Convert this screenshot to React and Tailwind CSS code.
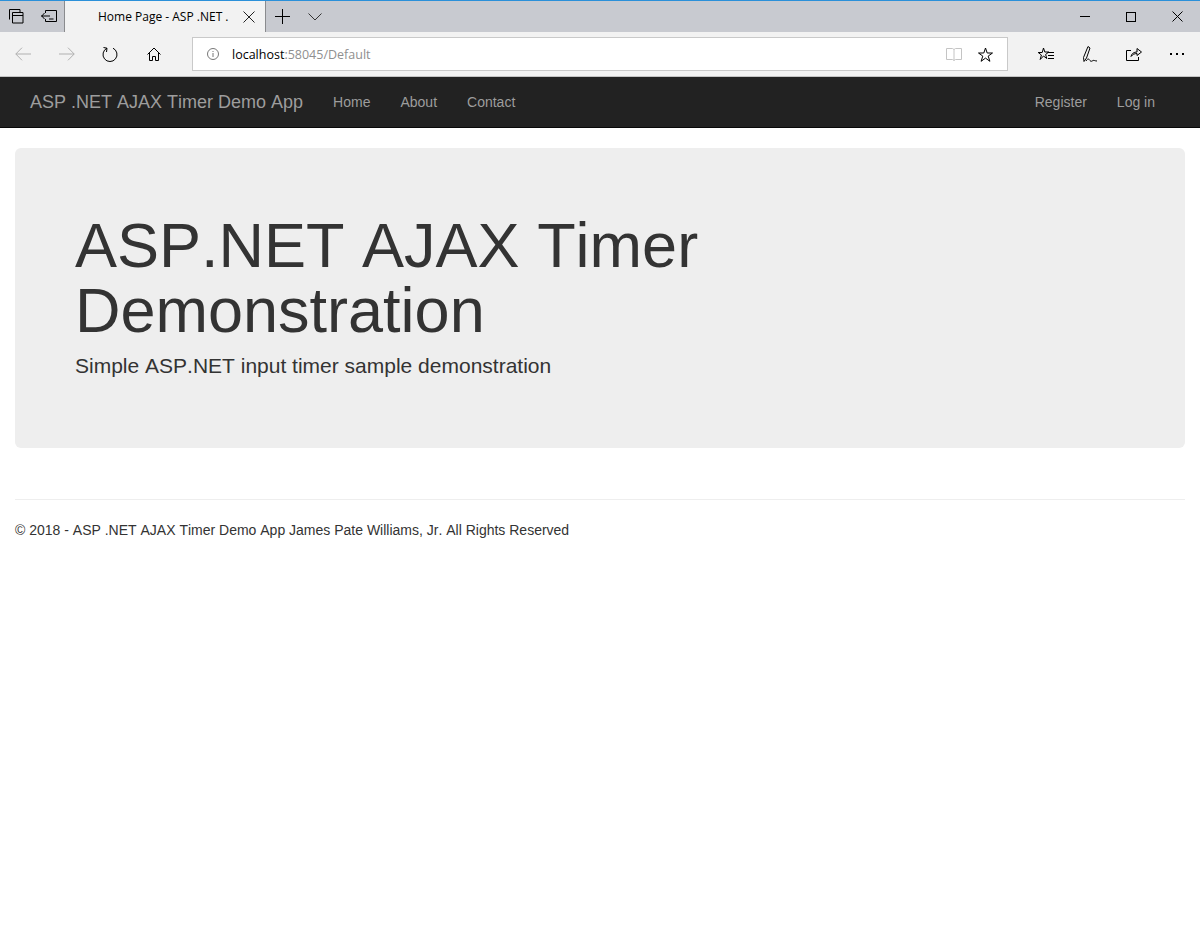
function Icon({ w, h, className = "", children, stroke = "black" }) {
  return (
    <svg className={`shrink-0 ${className}`} width={w} height={h} viewBox={`0 0 ${w} ${h}`} fill="none" stroke={stroke}>
      {children}
    </svg>
  );
}

function BrowserChrome() {
  return (
    <div className="font-['Open_Sans',sans-serif]">
      {/* Title bar with tab */}
      <div className="h-[32px] flex items-stretch bg-[#c8cad0] border-t-[1px] border-[#2b90d9]">
        <div className="w-[64px] flex items-center">
          <Icon w={15} h={15} className="ml-[9px]">
            <path d="M.5 10.500V.5h10.500V3M3.500 3.500h10.500v10.500H3.500zM3.500 6.500h10.500" />
          </Icon>
          <Icon w={16} h={13} className="ml-[17px]">
            <path d="M4.500 3V.5h11v11h-11V9M0 6h9M3.500 3L.8 6l2.700 3M8 9h4.500" />
          </Icon>
        </div>
        <div className="w-[202px] bg-[#f2f2f2] border-x border-[#8a8b8e] flex items-center">
          <span className="ml-[33px] w-[135px] overflow-hidden whitespace-nowrap text-[12px] text-black">Home Page - ASP .NET .</span>
          <Icon w={12} h={12} className="ml-[10px]" stroke="#222">
            <path d="M.5.5l11 11M11.500.5l-11 11" />
          </Icon>
        </div>
        <Icon w={15} h={15} className="ml-[9px] self-center">
          <path d="M7.500 0v15M0 7.500h15" />
        </Icon>
        <Icon w={14} h={8} className="ml-[18px] self-center" stroke="#333">
          <path d="M.5.5L7 7l6.500-6.500" />
        </Icon>
        <div className="ml-auto flex items-center">
          <Icon w={10} h={1} className="mr-[36px]">
            <path d="M0 .5h10" />
          </Icon>
          <Icon w={10} h={10} className="mr-[36px]">
            <rect x=".5" y=".5" width="9" height="9" />
          </Icon>
          <Icon w={11} h={11} className="mr-[17px]">
            <path d="M.5.5l10 10M10.500.5l-10 10" />
          </Icon>
        </div>
      </div>
      {/* Address toolbar */}
      <div className="h-[45px] bg-[#f2f2f2] border-b border-[#c4c4c4] flex items-center">
        <Icon w={16} h={14} className="ml-[15px]" stroke="#b0b0b0">
          <path d="M.8 7H16M7 .7L.8 7 7 13.300" />
        </Icon>
        <Icon w={16} h={14} className="ml-[28px]" stroke="#b0b0b0">
          <path d="M0 7h15.200M9 .7L15.200 7 9 13.300" />
        </Icon>
        <Icon w={16} h={16} className="ml-[27px]">
          <path d="M5 2.200A7 7 0 1 0 11 2.200M1.500 1.500L5 2.200 4.500 6" />
        </Icon>
        <Icon w={14} h={14} className="ml-[29px]">
          <path d="M.5 7.500L7 1l6.500 6.500M2.500 5.500v8h3v-4h3v4h3v-8" />
        </Icon>
        <div className="ml-[31px] w-[816px] h-[34px] bg-white border border-[#c9c9c9] flex items-center">
          <Icon w={12} h={12} className="ml-[14px]" stroke="#777">
            <circle cx="6" cy="6" r="5.500" />
            <path d="M6 5v4M6 3v1" />
          </Icon>
          <span className="ml-[13px] pt-[2px] text-[12.5px] text-black">
            localhost<span className="text-[#8f8f8f]">:58045/Default</span>
          </span>
          <Icon w={16} h={14} className="ml-auto" stroke="#c4c4c4">
            <path d="M.5 1.500h6L8 2.500l1.500-1h6v11h-6L8 13.500l-1.500-1h-6zM8 2.500v11" />
          </Icon>
          <Icon w={15} h={15} className="ml-[16px] mr-[14px]">
            <path d="M7.500 1l1.700 5h5.300l-4.300 3.100 1.700 5.200-4.400-3.200-4.400 3.200 1.700-5.200L.5 6h5.300z" />
          </Icon>
        </div>
        <Icon w={16} h={15} className="ml-[30px]">
          <path d="M5.500 1l1.300 4h4l-3.200 2.500 1.200 4-3.300-2.500L2.200 12.500l1.200-4.500L.2 5.500h4zM9.500 5.500H16M10 8.500h6M10 11.500h6" />
        </Icon>
        <Icon w={15} h={17} className="ml-[29px]">
          <path d="M5 .5l2 1.500L3.500 12 1 15.500l-.5-4zM3 15c2-3 3-2 4-.5s2 .5 3 0 2 .5 4 .5" />
        </Icon>
        <Icon w={16} h={14} className="ml-[28px]">
          <path d="M5 3.500H.5v10h12V10M5 9.500c.5-3 3-4.500 6-4.500V1.500L15.500 5 11 8.500V6.500c-2.500 0-4.500 1-6 3z" />
        </Icon>
        <div className="ml-[28px] flex gap-[4px]">
          <div className="w-[2px] h-[2px] bg-black" />
          <div className="w-[2px] h-[2px] bg-black" />
          <div className="w-[2px] h-[2px] bg-black" />
        </div>
      </div>
    </div>
  );
}

function NavLink({ children, className = "" }) {
  return <a className={`text-[14px] text-[#9d9d9d] ${className}`}>{children}</a>;
}

export default function App() {
  return (
    <div className="min-h-[932px] bg-white font-['Liberation_Sans',Arial,sans-serif] [font-kerning:none] text-[14px] text-[#333]">
      <BrowserChrome />
      <nav className="h-[51px] bg-[#222] border-b border-[#080808] flex items-center px-[30px]">
        <a className="text-[18px] text-[#9d9d9d]">ASP .NET AJAX Timer Demo App</a>
        <NavLink className="ml-[30px]">Home</NavLink>
        <NavLink className="ml-[30px]">About</NavLink>
        <NavLink className="ml-[30px]">Contact</NavLink>
        <NavLink className="ml-auto">Register</NavLink>
        <NavLink className="ml-[30px] mr-[15px]">Log in</NavLink>
      </nav>
      <main className="px-[15px]">
        <section className="mt-[20px] h-[300px] bg-[#eee] rounded-[6px] px-[60px] pt-[65px]">
          <h1 className="w-[700px] text-[63px] leading-[65px]">ASP.NET AJAX Timer Demonstration</h1>
          <p className="mt-[8px] text-[21px] leading-[30px]">Simple ASP.NET input timer sample demonstration</p>
        </section>
        <hr className="mt-[51px] border-[#eee]" />
        <footer className="mt-[20px] leading-[20px]">© 2018 - ASP .NET AJAX Timer Demo App James Pate Williams, Jr. All Rights Reserved</footer>
      </main>
    </div>
  );
}
